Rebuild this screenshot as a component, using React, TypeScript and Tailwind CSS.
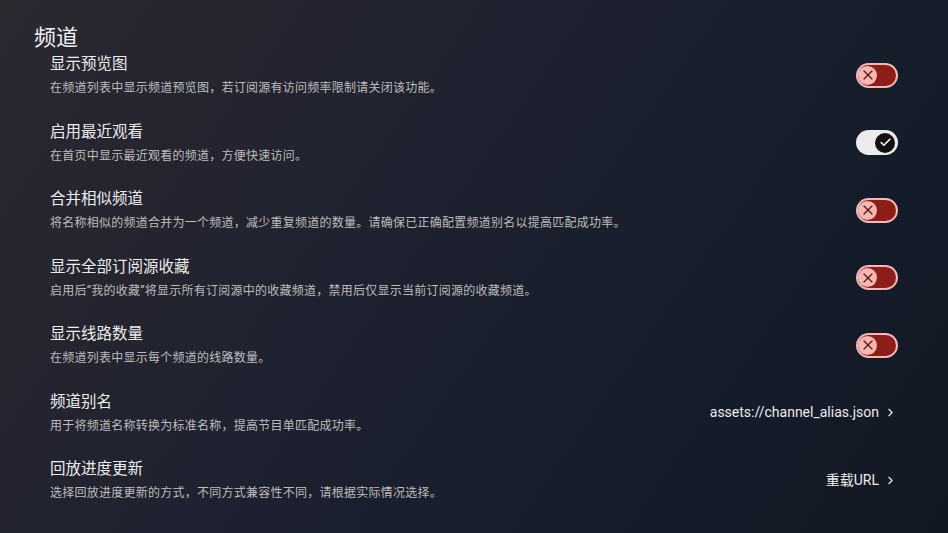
import React from 'react';
import { ChevronRight, X, Check } from 'lucide-react';

type Item = {
  title: string;
  desc: string;
  kind: 'switch' | 'link';
  on?: boolean;
  value?: string;
};

const items: Item[] = [
  { title: '显示预览图', desc: '在频道列表中显示频道预览图，若订阅源有访问频率限制请关闭该功能。', kind: 'switch', on: false },
  { title: '启用最近观看', desc: '在首页中显示最近观看的频道，方便快速访问。', kind: 'switch', on: true },
  { title: '合并相似频道', desc: '将名称相似的频道合并为一个频道，减少重复频道的数量。请确保已正确配置频道别名以提高匹配成功率。', kind: 'switch', on: false },
  { title: '显示全部订阅源收藏', desc: '启用后“我的收藏”将显示所有订阅源中的收藏频道，禁用后仅显示当前订阅源的收藏频道。', kind: 'switch', on: false },
  { title: '显示线路数量', desc: '在频道列表中显示每个频道的线路数量。', kind: 'switch', on: false },
  { title: '频道别名', desc: '用于将频道名称转换为标准名称，提高节目单匹配成功率。', kind: 'link', value: 'assets://channel_alias.json' },
  { title: '回放进度更新', desc: '选择回放进度更新的方式，不同方式兼容性不同，请根据实际情况选择。', kind: 'link', value: '重载URL' },
];

const Toggle: React.FC<{ on: boolean }> = ({ on }) =>
  on ? (
    <div className="w-[42px] h-[25px] rounded-full bg-[#ececec] flex items-center justify-end pr-[3px]">
      <div className="w-[20px] h-[20px] rounded-full bg-[#111111] flex items-center justify-center">
        <Check size={13} strokeWidth={3} className="text-white" />
      </div>
    </div>
  ) : (
    <div className="w-[42px] h-[25px] rounded-full bg-[#8c1d18] border-2 border-[#f2b8b5] flex items-center">
      <div className="w-[19px] h-[19px] rounded-full bg-[#f2b8b5] flex items-center justify-center">
        <X size={16} strokeWidth={1.8} className="text-[#601410]" />
      </div>
    </div>
  );

export default function App() {
  return (
    <div
      className="w-[948px] h-[533px] overflow-hidden bg-[linear-gradient(125deg,#2b2830_0%,#1f2230_40%,#161d2b_70%,#121823_100%)] text-[#ececec]"
      style={{ fontFamily: 'Roboto, "Noto Sans CJK SC", sans-serif' }}
    >
      <div className="pl-[34px] pr-[50px] pt-[25px]">
        <div className="h-[26px] leading-[26px] text-[22px] text-[#f0f0f0]">频道</div>
        <div className="mt-[3px] pl-[16px] flex flex-col gap-[25.5px]">
          {items.map((it) => (
            <div key={it.title} className="flex items-center justify-between h-[42px]">
              <div className="flex flex-col gap-[6px]">
                <div className="text-[15.5px] leading-[20px] text-[#ececec]">{it.title}</div>
                <div className="text-[12px] leading-[16px] tracking-[0.25px] text-[#bdbdbd]">{it.desc}</div>
              </div>
              {it.kind === 'switch' ? (
                <Toggle on={!!it.on} />
              ) : (
                <div className="flex items-center gap-[3px] text-[14px] text-[#ececec]">
                  <span>{it.value}</span>
                  <span className="w-[16px] h-[16px] flex items-center justify-center">
                    <ChevronRight size={13} strokeWidth={2} />
                  </span>
                </div>
              )}
            </div>
          ))}
        </div>
      </div>
    </div>
  );
}
